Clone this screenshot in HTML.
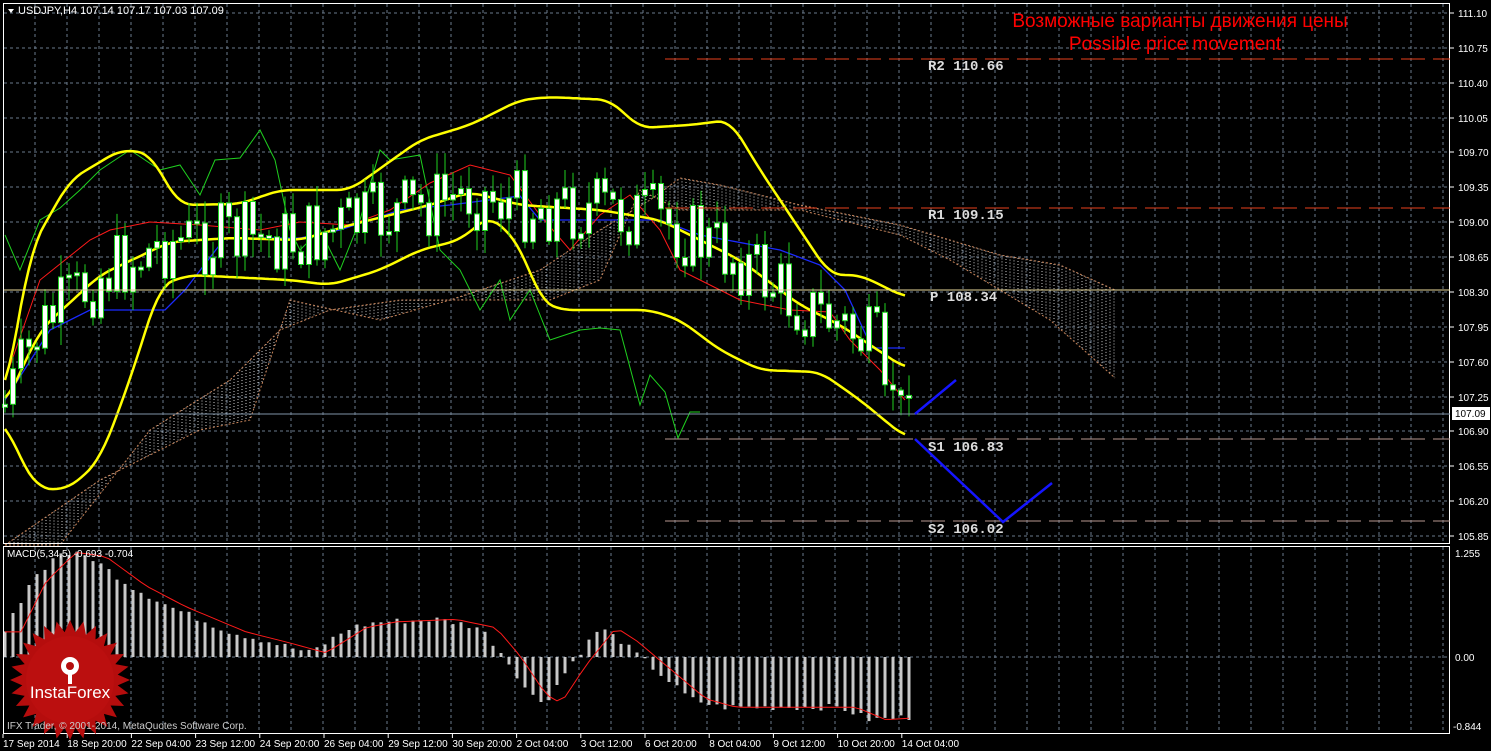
<!DOCTYPE html>
<html><head><meta charset="utf-8"><style>
html,body{margin:0;padding:0;background:#000;width:1491px;height:751px;overflow:hidden}
svg{display:block}
text{font-family:"Liberation Sans",sans-serif}
</style></head><body>
<svg id="s" width="1491" height="751" xmlns="http://www.w3.org/2000/svg">
<rect width="1491" height="751" fill="#000"/>
<g id="grid"></g>
<g id="cloud"></g>
<g id="lines"></g>
<g id="cand"></g>
<g id="macd"></g>
<rect x="3.5" y="3.5" width="1446" height="540" fill="none" stroke="#fff" stroke-width="1"/>
<rect x="3.5" y="546.5" width="1446" height="187" fill="none" stroke="#fff" stroke-width="1"/>
<line x1="665" y1="59" x2="1450" y2="59" stroke="#e8401c" stroke-dasharray="24,8"/>
<line x1="665" y1="208" x2="1450" y2="208" stroke="#e8401c" stroke-dasharray="24,8"/>
<line x1="4" y1="290" x2="1450" y2="290" stroke="#e8d89a"/>
<line x1="4" y1="414" x2="1450" y2="414" stroke="#7f93a8"/>
<line x1="665" y1="439" x2="1450" y2="439" stroke="#b89890" stroke-dasharray="24,8"/>
<line x1="665" y1="521" x2="1450" y2="521" stroke="#b89890" stroke-dasharray="24,8"/>
<g font-size="14" font-weight="bold" fill="#ddd">
<text x="928" y="70" style="font-family:'Liberation Mono',monospace">R2 110.66</text>
<text x="928" y="219" style="font-family:'Liberation Mono',monospace">R1 109.15</text>
<text x="930" y="301" style="font-family:'Liberation Mono',monospace">P 108.34</text>
<text x="928" y="451" style="font-family:'Liberation Mono',monospace">S1 106.83</text>
<text x="928" y="533" style="font-family:'Liberation Mono',monospace">S2 106.02</text>
</g>
<polyline points="915,414 956,380" fill="none" stroke="#1515ff" stroke-width="2.5"/>
<polyline points="915,439 1003,522 1052,483" fill="none" stroke="#1515ff" stroke-width="2.5"/>
<text x="1180" y="27" fill="#f00" font-size="19" text-anchor="middle" style="font-family:'Liberation Sans','DejaVu Sans',sans-serif">Возможные варианты движения цены</text>
<text x="1175" y="50" fill="#f00" font-size="19" text-anchor="middle">Possible price movement</text>
<polygon points="8,9 14,9 11,13" fill="#fff"/>
<text x="18" y="14" fill="#fff" font-size="11">USDJPY,H4  107.14 107.17 107.03 107.09</text>
<text x="7" y="557" fill="#fff" font-size="10">MACD(5,34,5) -0.693 -0.704</text>
<g id="axis" fill="#fff" font-size="10"></g>
<rect x="1452" y="407" width="38" height="13" fill="#fff"/>
<text x="1455" y="417" fill="#000" font-size="10">107.09</text>
<text x="1455" y="557" fill="#fff" font-size="10">1.255</text>
<text x="1455" y="661" fill="#fff" font-size="10">0.00</text>
<text x="1453" y="730" fill="#fff" font-size="10">-0.844</text>
<g id="dates" fill="#fff" font-size="10"></g>
<g transform="translate(70,680)">
<polygon id="star" fill="#b50d0d"/>
<circle r="44" fill="#c01010" opacity="0.6"/>
<g fill="#fff"><circle cx="0" cy="-14" r="9"/><circle cx="0" cy="-14" r="4" fill="#b50d0d"/><rect x="-2" y="-10" width="4" height="14"/></g>
<text x="0" y="18" fill="#fff" font-size="17" text-anchor="middle">InstaForex</text>
</g>
<text x="7" y="729" fill="#ccc" font-size="10">IFX Trader, © 2001-2014, MetaQuotes Software Corp.</text>
</svg>
<script>
(function(){
var NS="http://www.w3.org/2000/svg";
function el(p,t,a){var e=document.createElementNS(NS,t);for(var k in a)e.setAttribute(k,a[k]);document.getElementById(p).appendChild(e);return e;}
function interp(pts,x){if(x<=pts[0][0])return pts[0][1];for(var i=1;i<pts.length;i++){if(x<=pts[i][0]){var a=pts[i-1],b=pts[i];return a[1]+(b[1]-a[1])*(x-a[0])/(b[0]-a[0]);}}return pts[pts.length-1][1];}
function smooth(pts,step){var out=[],x0=pts[0][0],x1=pts[pts.length-1][0];for(var x=x0;x<=x1;x+=step){var s=0,n=0;for(var d=-12;d<=12;d+=3){s+=interp(pts,Math.min(x1,Math.max(x0,x+d)));n++;}out.push([x,(s/n).toFixed(1)]);}return out;}
function pl(p,pts,c,w,extra){var a={points:pts.map(function(q){return q.join(",")}).join(" "),fill:"none",stroke:c,"stroke-width":w};for(var k in extra)a[k]=extra[k];el(p,"polyline",a);}
for(var x=35;x<1450;x+=32){el("grid","line",{x1:x,y1:4,x2:x,y2:543,stroke:"#6a7a8c","stroke-dasharray":"3,3"});el("grid","line",{x1:x,y1:547,x2:x,y2:733,stroke:"#6a7a8c","stroke-dasharray":"3,3"});}
var labs=["111.10","110.75","110.40","110.05","109.70","109.35","109.00","108.65","108.30","107.95","107.60","107.25","106.90","106.55","106.20","105.85"];
for(var i=0;i<16;i++){var y=Math.round(13+i*34.87);el("grid","line",{x1:4,y1:y,x2:1450,y2:y,stroke:"#6a7a8c","stroke-dasharray":"3,3"});var t=el("axis","text",{x:1458,y:y+4});t.textContent=labs[i];el("axis","line",{x1:1450,y1:y,x2:1454,y2:y,stroke:"#fff"});}
el("grid","line",{x1:4,y1:657,x2:1450,y2:657,stroke:"#6a7a8c","stroke-dasharray":"3,3"});
var dl=["17 Sep 2014","18 Sep 20:00","22 Sep 04:00","23 Sep 12:00","24 Sep 20:00","26 Sep 04:00","29 Sep 12:00","30 Sep 20:00","2 Oct 04:00","3 Oct 12:00","6 Oct 20:00","8 Oct 04:00","9 Oct 12:00","10 Oct 20:00","14 Oct 04:00"];
for(var i=0;i<dl.length;i++){var x=i==0?3:3+i*64.2;var t=el("dates","text",{x:x,y:747});t.textContent=dl[i];el("dates","line",{x1:x,y1:734,x2:x,y2:738,stroke:"#fff"});}
var cu=[[5,545],[100,480],[200,430],[250,420],[290,300],[380,320],[450,300],[540,270],[600,230],[650,200],[680,178],[720,185],[800,205],[900,225],[1000,255],[1060,265],[1115,290]];
var cl=[[5,545],[60,545],[150,430],[230,380],[280,330],[330,310],[400,300],[550,300],[600,280],[640,190],[680,210],[800,210],[900,235],[950,260],[1050,320],[1115,378]];
for(var x=6;x<1115;x+=4){var a=interp(cu,x),b=interp(cl,x);el("cloud","line",{x1:x,y1:Math.min(a,b),x2:x,y2:Math.max(a,b),stroke:"#c8c8c8","stroke-dasharray":"1,2","stroke-width":1});}
pl("cloud",cu,"#c8845a",1,{"stroke-dasharray":"2,2"});pl("cloud",cl,"#c8845a",1,{"stroke-dasharray":"2,2"});
var up=[[5,400],[30,250],[70,180],[120,150],[150,153],[170,190],[180,205],[240,204],[280,190],[350,190],[420,140],[470,125],[520,100],[550,97],[610,100],[640,128],[690,125],[730,120],[760,170],[800,230],[830,275],[860,275],[905,297]];
var mid=[[5,405],[40,330],[100,275],[170,242],[230,238],[300,240],[350,225],[430,205],[470,192],[520,205],[600,210],[660,220],[740,260],[800,305],[840,325],[905,368]];
var lo=[[5,420],[20,460],[40,490],[70,488],[100,460],[130,380],[160,285],[190,275],[290,280],[330,285],[380,270],[420,250],[460,240],[490,215],[520,245],[540,300],[560,310],[650,310],[680,320],[720,350],[760,370],[820,372],[860,400],[905,437]];
var blue=[[5,400],[50,330],[90,310],[165,310],[185,290],[225,238],[300,238],[340,230],[400,210],[450,205],[520,196],[540,220],[660,220],[700,235],[780,250],[820,265],[845,290],[872,348],[905,348]];
var red=[[5,380],[40,280],[90,240],[110,230],[150,222],[200,225],[260,230],[300,222],[350,225],[390,210],[430,183],[470,165],[510,175],[540,215],[570,250],[600,215],[630,195],[660,230],[680,270],[700,280],[740,300],[790,310],[830,312],[850,340],[880,370],[905,400]];
var green=[[5,235],[20,270],[40,220],[60,208],[80,190],[100,170],[130,150],[160,170],[180,165],[200,195],[215,160],[240,158],[260,130],[275,160],[290,230],[300,250],[320,230],[340,270],[360,220],[380,150],[390,160],[420,155],[440,250],[460,270],[480,310],[500,280],[510,320],[530,290],[550,340],[580,330],[600,328],[620,330],[640,405],[650,375],[665,392],[678,438],[690,412],[700,412]];
pl("lines",green,"#1fd01f",1);pl("lines",blue,"#1a2aff",1.3);pl("lines",red,"#ff1a1a",1);
pl("lines",smooth(up,4),"#ffff00",2.5);pl("lines",smooth(mid,4),"#ffff00",2.5);pl("lines",smooth(lo,4),"#ffff00",2.5);
var seed=7;function rnd(){seed=(seed*9301+49297)%233280;return seed/233280;}
var prev=interp(mid,5);
for(var x=5;x<=909;x+=8){var m=interp(mid,x)+(rnd()-0.5)*75;var o=prev,c=m;if(x>880)c=interp(mid,x)+30;var bt=Math.min(o,c),bb=Math.max(o,c);if(bb-bt<3)bb=bt+3;var hi=bt-rnd()*20-3,lw=bb+rnd()*20+3;
el("cand","line",{x1:x,y1:hi.toFixed(1),x2:x,y2:lw.toFixed(1),stroke:"#1fd01f"});el("cand","rect",{x:x-2.5,y:bt.toFixed(1),width:5,height:(bb-bt).toFixed(1),fill:"#fff",stroke:"#1fd01f","stroke-width":1});prev=c;}
var mv=[[5,0.3],[30,0.9],[60,1.25],[90,1.2],[130,0.85],[170,0.6],[230,0.3],[270,0.18],[310,0.05],[350,0.35],[380,0.42],[440,0.45],[480,0.35],[505,0],[530,-0.45],[545,-0.55],[570,-0.1],[600,0.35],[620,0.2],[650,-0.1],[690,-0.5],[720,-0.6],[780,-0.6],[840,-0.6],[870,-0.75],[908,-0.72]];
var sc=83.7,sig=[];
for(var x=5;x<=909;x+=8){var v=interp(mv,x)+(rnd()-0.5)*0.08;var yy=657-v*sc;el("macd","rect",{x:x-1.5,y:Math.min(yy,657).toFixed(1),width:3,height:Math.abs(657-yy).toFixed(1),fill:"#c8c8c8"});sig.push([x,(657-interp(mv,x-16)*sc).toFixed(1)]);}
pl("macd",sig,"#ff1a1a",1);
var pts=[];for(var i=0;i<56;i++){var r=i%2?48:60;var a=i*Math.PI/28;pts.push((r*Math.cos(a)).toFixed(1)+","+(r*Math.sin(a)).toFixed(1));}
document.getElementById("star").setAttribute("points",pts.join(" "));
})();
</script>
</body></html>
